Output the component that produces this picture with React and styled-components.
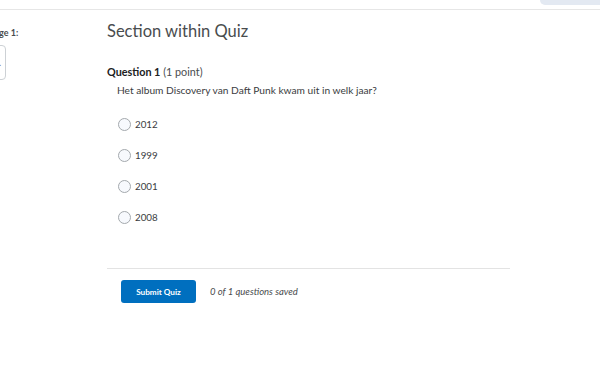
import React from "react";
import styled, { createGlobalStyle } from "styled-components";

const Global = createGlobalStyle`
  html, body { margin: 0; padding: 0; background: #fff; }
  body { font-family: Lato, "Noto Sans", sans-serif; color: #494c4e; overflow: hidden; }
`;

const Header = styled.div`
  height: 9px;
  border-bottom: 1px solid #e6e6e6;
  display: flex;
  justify-content: flex-end;
  align-items: flex-start;
`;

const Tab = styled.div`
  width: 60px;
  height: 5px;
  background: #e3e9f2;
  border-bottom-left-radius: 5px;
`;

const Main = styled.div`
  display: flex;
`;

const Sidebar = styled.div`
  width: 107px;
  flex-shrink: 0;
  overflow: hidden;
  padding-top: 17px;
`;

const SideInner = styled.div`
  margin-left: -11px;
`;

const SideLabel = styled.div`
  font-size: 9px;
  font-weight: 700;
  line-height: 12px;
  color: #494c4e;
`;

const SideBox = styled.div`
  margin-top: 6px;
  margin-left: -10px;
  width: 27px;
  height: 35px;
  border: 1px solid #cdd1d5;
  border-radius: 4px;
  box-sizing: border-box;
  display: flex;
  align-items: center;
  justify-content: flex-end;
  padding-right: 4px;
  font-size: 9px;
  color: #777;
`;

const Content = styled.div`
  width: 403px;
  padding-top: 10px;
`;

const Title = styled.h1`
  margin: 0;
  font-size: 16.5px;
  font-weight: 400;
  line-height: 22px;
  color: #494c4e;
`;

const QHeader = styled.div`
  margin-top: 23px;
  font-size: 10.8px;
  line-height: 14px;
  color: #202122;
`;

const QNum = styled.span`
  font-weight: 700;
`;

const QPoints = styled.span`
  font-weight: 400;
  color: #494c4e;
`;

const QText = styled.div`
  margin-top: 4px;
  margin-left: 10px;
  font-size: 10.2px;
  line-height: 14px;
  color: #3a3c3e;
`;

const Options = styled.div`
  margin-top: 19px;
  margin-left: 11px;
  display: flex;
  flex-direction: column;
  gap: 15px;
`;

const Option = styled.label`
  display: flex;
  align-items: center;
  gap: 4px;
  height: 16px;
  font-size: 9.8px;
  color: #3a3c3e;
`;

const Radio = styled.span`
  width: 13px;
  height: 13px;
  box-sizing: border-box;
  border: 1px solid #a4a9ad;
  border-radius: 50%;
  background: #f7f9fd;
`;

const Divider = styled.div`
  margin-top: 43px;
  border-top: 1px solid #e3e3e3;
`;

const Footer = styled.div`
  margin-top: 11px;
  padding-left: 14px;
  display: flex;
  align-items: center;
  gap: 14px;
`;

const SubmitButton = styled.button`
  width: 75px;
  height: 23px;
  border: none;
  border-radius: 3px;
  background: #006fbf;
  color: #fff;
  font-family: Lato, "Noto Sans", sans-serif;
  font-weight: 700;
  font-size: 8.2px;
  padding: 0;
`;

const Saved = styled.span`
  font-size: 9.5px;
  font-style: italic;
  color: #494c4e;
`;

const answers = ["2012", "1999", "2001", "2008"];

export default function App() {
  return (
    <>
      <Global />
      <Header>
        <Tab />
      </Header>
      <Main>
        <Sidebar>
          <SideInner>
            <SideLabel>Page 1:</SideLabel>
            <SideBox>.</SideBox>
          </SideInner>
        </Sidebar>
        <Content>
          <Title>Section within Quiz</Title>
          <QHeader>
            <QNum>Question 1</QNum> <QPoints>(1 point)</QPoints>
          </QHeader>
          <QText>Het album Discovery van Daft Punk kwam uit in welk jaar?</QText>
          <Options>
            {answers.map((a) => (
              <Option key={a}>
                <Radio />
                {a}
              </Option>
            ))}
          </Options>
          <Divider />
          <Footer>
            <SubmitButton>Submit Quiz</SubmitButton>
            <Saved>0 of 1 questions saved</Saved>
          </Footer>
        </Content>
      </Main>
    </>
  );
}
